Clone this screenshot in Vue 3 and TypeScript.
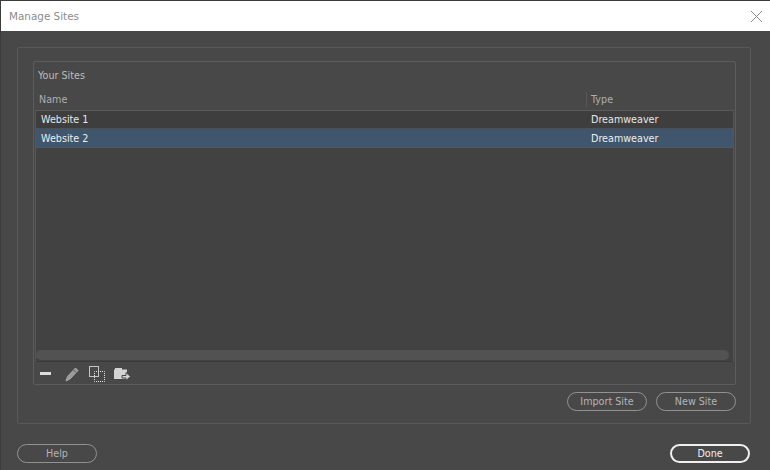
<script setup lang="ts">
const sites = [
  { name: 'Website 1', type: 'Dreamweaver', selected: false },
  { name: 'Website 2', type: 'Dreamweaver', selected: true },
]
</script>

<template>
  <div class="window">
    <header class="titlebar">
      <span class="title">Manage Sites</span>
      <svg class="close" width="13" height="13" viewBox="0 0 13 13">
        <path d="M1 1L12 12M12 1L1 12" stroke="#8a8a8a" stroke-width="1" fill="none" />
      </svg>
    </header>
    <main class="body">
      <section class="outer">
        <div class="inner">
          <div class="caption">Your Sites</div>
          <div class="head">
            <span class="col-name">Name</span>
            <span class="col-type">Type</span>
          </div>
          <div class="table">
            <div class="rows">
              <div v-for="s in sites" :key="s.name" class="row" :class="{ selected: s.selected }">
                <span class="cell-name">{{ s.name }}</span>
                <span class="cell-type">{{ s.type }}</span>
              </div>
            </div>
            <div class="scrolltrack"><div class="scrollthumb"></div></div>
          </div>
          <div class="toolbar">
            <svg width="11" height="3" viewBox="0 0 11 3" class="ic-minus">
              <rect x="0" y="0" width="11" height="3" fill="#dcdcdc" />
            </svg>
            <svg width="14" height="15" viewBox="0 0 14 15" class="ic-pencil">
              <path d="M10.500 1l2.500 2.500-8 8.500-4 2 1.500-4.500z" fill="#9a9a9a" stroke="#a8a8a8" stroke-width="1" />
              <path d="M8.500 3l2.500 2.500" stroke="#5c5c5c" stroke-width="1" />
            </svg>
            <svg width="17" height="17" viewBox="0 0 17 17" class="ic-dup">
              <rect x="0.500" y="0.500" width="9" height="10" fill="none" stroke="#c4c4c4" />
              <rect x="5.500" y="5.500" width="10" height="10" fill="none" stroke="#e4e4e4" stroke-dasharray="1 1" stroke-dashoffset="0.500" />
            </svg>
            <svg width="17" height="15" viewBox="0 0 17 15" class="ic-export">
              <path d="M0 2.500h1V1h7v1.500h5v9.500H0z" fill="#d4d4d4" />
              <path d="M8 8.500h4V5.500l4.500 4-4.500 4v-2.500H8z" fill="#d4d4d4" stroke="#484848" stroke-width="1" />
            </svg>
          </div>
        </div>
        <div class="actions">
          <button class="btn" type="button">Import Site</button>
          <button class="btn" type="button">New Site</button>
        </div>
      </section>
      <footer class="footer">
        <button class="btn" type="button">Help</button>
        <button class="btn primary" type="button">Done</button>
      </footer>
    </main>
  </div>
</template>

<style scoped>
.window {
  width: 770px;
  height: 470px;
  box-sizing: border-box;
  border-top: 1px solid #3c3c3c;
  border-left: 1px solid #3c3c3c;
  background: #484848;
  display: flex;
  flex-direction: column;
  font-family: "DejaVu Sans", sans-serif;
  font-size: 9.6px;
  overflow: hidden;
}
.titlebar {
  height: 30px;
  background: #fff;
  display: flex;
  align-items: center;
  justify-content: space-between;
  padding: 0 7px 0 8px;
  flex: none;
}
.title {
  color: #8c8c8c;
  font-size: 10.4px;
}
.body {
  flex: 1;
  display: flex;
  flex-direction: column;
  padding: 16px 19px 6px 16px;
}
.outer {
  height: 377px;
  box-sizing: border-box;
  border: 1px solid #585858;
  border-radius: 2px;
  padding: 13px 14px 0 15px;
}
.inner {
  height: 324px;
  box-sizing: border-box;
  border: 1px solid #5c5c5c;
  border-radius: 2px;
  padding: 0 1px;
  display: flex;
  flex-direction: column;
}
.caption {
  height: 26px;
  line-height: 28px;
  padding-left: 3px;
  color: #bdbdbd;
  flex: none;
}
.head {
  height: 22px;
  display: flex;
  align-items: center;
  color: #aeaeae;
  flex: none;
}
.col-name {
  width: 551px;
  padding-left: 4px;
  box-sizing: border-box;
}
.col-type {
  height: 15px;
  line-height: 16px;
  border-left: 1px solid #585858;
  padding-left: 4px;
}
.table {
  flex: 1;
  min-height: 0;
  background: #424242;
  border-top: 1px solid #5a5a5a;
  border-left: 1px solid #565656;
  border-right: 1px solid #565656;
  display: flex;
  flex-direction: column;
}
.rows {
  flex: 1;
}
.row {
  height: 19px;
  box-sizing: border-box;
  display: flex;
  align-items: center;
  background: #3e3e3e;
  color: #e8e8e8;
  border-bottom: 1px solid #505050;
}
.row:first-child {
  height: 18px;
}
.row.selected {
  background: #3f566c;
  color: #eeeeee;
  border-bottom-color: #4a5a68;
}
.cell-name {
  width: 549px;
  padding-left: 5px;
  box-sizing: border-box;
}
.cell-type {
  padding-left: 6px;
}
.scrolltrack {
  height: 11px;
  flex: none;
  padding-right: 4px;
  background: #424242;
  border-bottom: 1px solid #3a3a3a;
}
.scrollthumb {
  height: 10px;
  background: #525252;
  border-radius: 5px;
}
.toolbar {
  height: 22px;
  box-sizing: border-box;
  padding-top: 2px;
  flex: none;
  display: flex;
  align-items: center;
  padding-left: 5px;
}
.ic-minus { margin-right: 14px; margin-bottom: 2px; }
.ic-pencil { margin-right: 10px; }
.ic-dup { margin-right: 8px; }
.actions {
  display: flex;
  justify-content: flex-end;
  gap: 9px;
  margin-top: 7px;
}
.btn {
  width: 80px;
  height: 19px;
  padding: 0;
  box-sizing: border-box;
  background: transparent;
  border: 1px solid #929292;
  border-radius: 10px;
  color: #b4b4b4;
  font-family: inherit;
  font-size: 9.6px;
  line-height: 15px;
}
.footer {
  display: flex;
  justify-content: space-between;
  margin-top: 20px;
  padding-right: 1px;
}
.primary {
  border: 2px solid #f0f0f0;
  color: #f0f0f0;
}
</style>
